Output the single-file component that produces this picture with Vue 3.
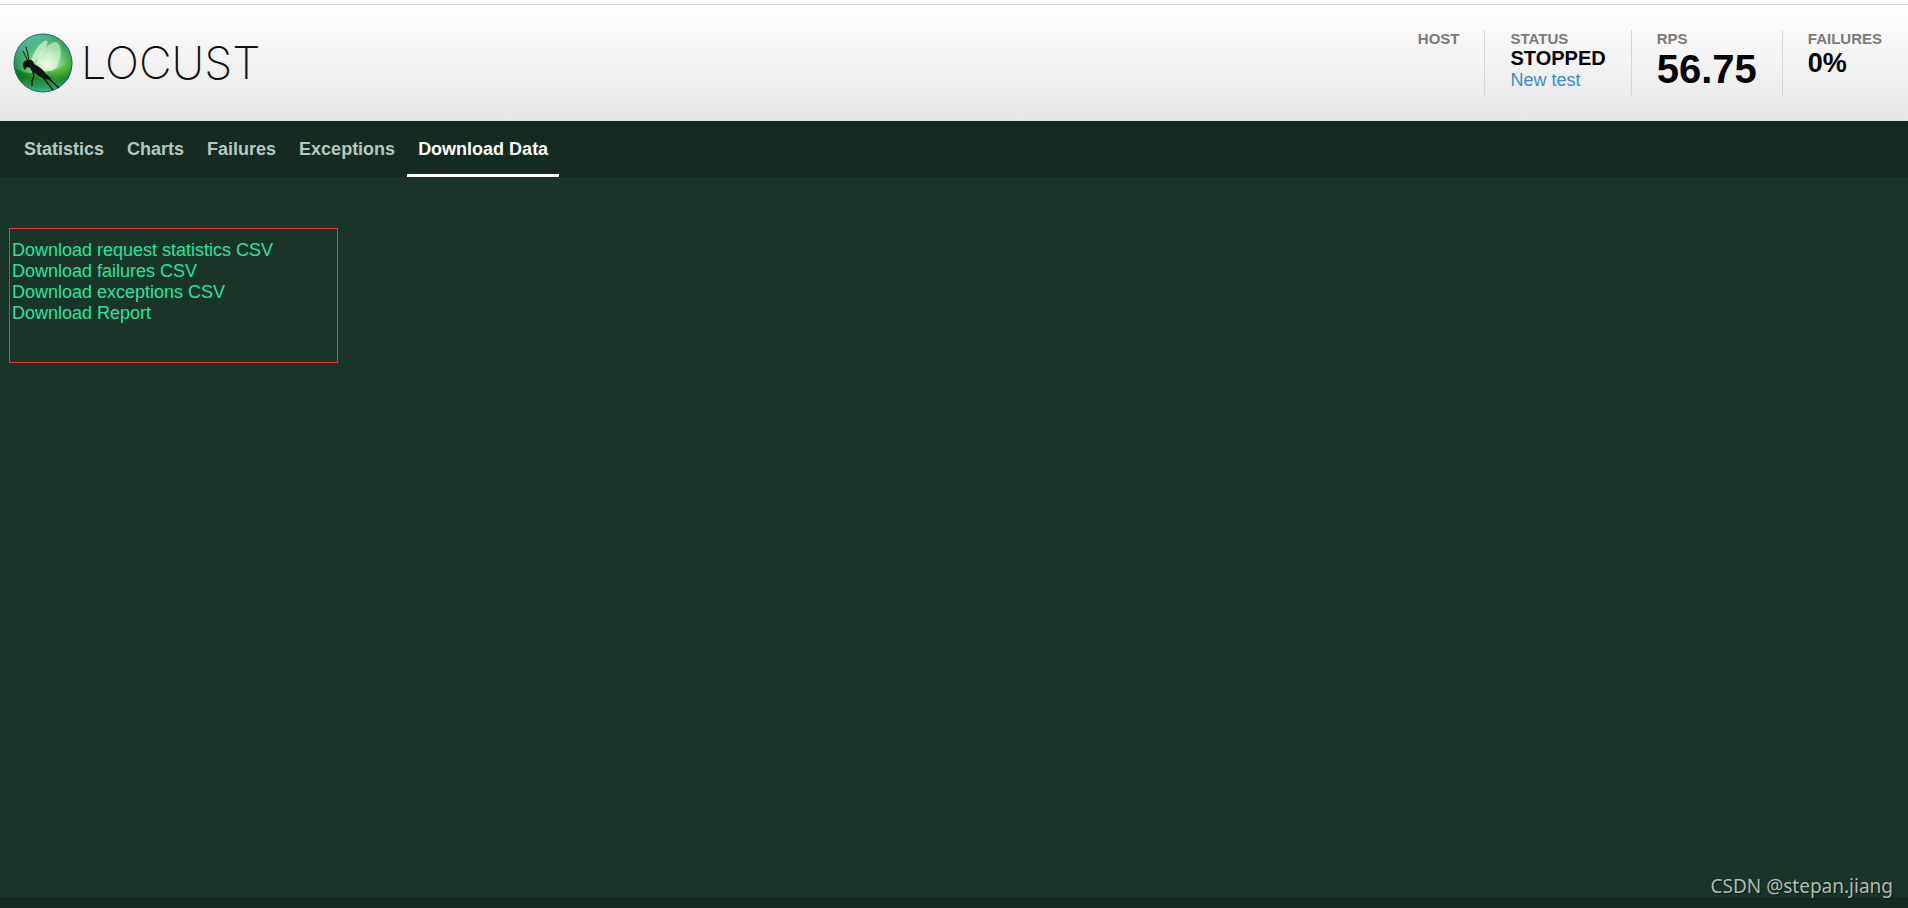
<template>
  <div class="page">
    <header class="top">
      <a href="#" class="brand" aria-label="Locust">
        <svg class="brand-mark" viewBox="0 0 60 60" aria-hidden="true">
          <defs>
            <radialGradient id="ball" cx="56%" cy="54%" r="56%">
              <stop offset="0" stop-color="#eafbe2" />
              <stop offset="0.3" stop-color="#a9e3a2" />
              <stop offset="0.65" stop-color="#4fb562" />
              <stop offset="1" stop-color="#1f8549" />
            </radialGradient>
            <linearGradient id="sky" x1="0.2" y1="0" x2="0.5" y2="0.7">
              <stop offset="0" stop-color="#62cfe0" stop-opacity="0.9" />
              <stop offset="0.6" stop-color="#5fc890" stop-opacity="0" />
            </linearGradient>
            <radialGradient id="ground" cx="62%" cy="10%" r="80%">
              <stop offset="0" stop-color="#b5eb9c" />
              <stop offset="0.4" stop-color="#4db43c" />
              <stop offset="0.75" stop-color="#17801f" />
              <stop offset="1" stop-color="#0f6b22" />
            </radialGradient>
            <linearGradient id="glow" x1="0" y1="0" x2="0" y2="1">
              <stop offset="0.75" stop-color="#45d0a8" stop-opacity="0" />
              <stop offset="1" stop-color="#45d0a8" stop-opacity="0.8" />
            </linearGradient>
          </defs>
          <circle cx="30" cy="30" r="29" fill="url(#ball)" />
          <circle cx="30" cy="30" r="29" fill="url(#sky)" />
          <path d="M2 35Q10 41 24 40Q46 38 59 26Q61 46 46 54Q30 63 14 54Q3 47 2 35Z" fill="url(#ground)" />
          <circle cx="30" cy="30" r="29" fill="url(#glow)" />
          <circle cx="30" cy="30" r="29" fill="none" stroke="#23685e" stroke-width="1" />
          <path d="M18 28Q22 14 31 8Q36 6 34 12Q30 20 21 29Z" fill="#e8fbe8" fill-opacity="0.6" />
          <path d="M23 30Q28 14 41 9Q48 8 48 20Q46 34 39 38Q31 39 23 30Z" fill="#f0fff0" fill-opacity="0.5" />
          <path d="M10 31Q11 27 15 27Q20 26 21 31Q29 35 33 41L38 45L37 47Q29 46 23 41Q18 38 17 35L14 34L12 37Q10 35 10 31Z" fill="#101713" />
          <path d="M15 28Q12 22 10 18M16 28Q15 20 13 14" fill="none" stroke="#101713" stroke-width="1" />
          <path d="M19 36L21 43L19 48L19 53M29 43L40 57M33 43L46 55" fill="none" stroke="#101713" stroke-width="1.4" />
        </svg>
        <span class="brand-name">LOCUST</span>
      </a>
      <div class="stats">
        <div class="stat">
          <span class="label">HOST</span>
        </div>
        <div class="stat">
          <span class="label">STATUS</span>
          <strong class="value">STOPPED</strong>
          <a href="#" class="new-test">New test</a>
        </div>
        <div class="stat">
          <span class="label">RPS</span>
          <strong class="value rps">{{ rps }}</strong>
        </div>
        <div class="stat">
          <span class="label">FAILURES</span>
          <strong class="value failures">{{ failRatio }}%</strong>
        </div>
      </div>
    </header>

    <nav class="tabs">
      <a
        v-for="tab in tabs"
        :key="tab"
        href="#"
        class="tab"
        :class="{ active: tab === activeTab }"
        @click.prevent="activeTab = tab"
      >{{ tab }}</a>
    </nav>

    <main class="content">
      <div class="downloads">
        <a v-for="item in downloads" :key="item" href="#">{{ item }}</a>
      </div>
    </main>

    <footer class="bottom"></footer>
    <span class="watermark">CSDN @stepan.jiang</span>
  </div>
</template>

<script setup>
import { ref } from 'vue'

const tabs = ['Statistics', 'Charts', 'Failures', 'Exceptions', 'Download Data']
const activeTab = ref('Download Data')

const downloads = [
  'Download request statistics CSV',
  'Download failures CSV',
  'Download exceptions CSV',
  'Download Report'
]

const rps = ref('56.75')
const failRatio = ref(0)
</script>

<style>
body {
  margin: 0;
  background: #19352a;
}
</style>

<style scoped>
.page {
  position: relative;
  display: flex;
  flex-direction: column;
  box-sizing: border-box;
  min-height: 100vh;
  padding-top: 4px;
  background: #ffffff;
  font-family: "Liberation Sans", Arial, sans-serif;
  font-size: 18px;
}

a {
  text-decoration: none;
}

.top {
  display: flex;
  justify-content: space-between;
  align-items: flex-start;
  border-top: 1px solid #d8d9dc;
  padding: 25px 0;
  background: linear-gradient(#ffffff, #e6e6e6);
}

.brand {
  display: flex;
  align-items: center;
  gap: 8px;
  padding: 3px 0 0 13px;
  color: #111111;
}

.brand-mark {
  width: 60px;
  height: 60px;
}

.brand-name {
  font-family: Inter, "Liberation Sans", sans-serif;
  font-size: 45px;
  font-weight: 200;
  line-height: 60px;
}

.stats {
  display: flex;
  padding-right: 1px;
}

.stat {
  display: flex;
  flex-direction: column;
  min-height: 66px;
  padding: 0 25px;
}

.stat + .stat {
  border-left: 1px solid #d6d6d6;
}

.label {
  font-size: 15px;
  font-weight: 700;
  line-height: 18px;
  color: #7b7b7b;
}

.value {
  font-size: 20px;
  line-height: 20px;
  color: #000000;
}

.rps {
  font-size: 40px;
  line-height: 42px;
}

.failures {
  font-size: 27px;
  line-height: 30px;
}

.new-test {
  line-height: 24px;
  color: #3d8bc1;
}

.tabs {
  display: flex;
  gap: 1px;
  padding-left: 13px;
  background: #152b22;
}

.tab {
  border-bottom: 3px solid transparent;
  padding: 3px 11px 0;
  font-weight: 700;
  line-height: 50px;
  color: #b4c8c0;
}

.tab.active {
  border-color: #ffffff;
  color: #ffffff;
}

.content {
  flex: 1;
  padding: 51px 9px;
  background: #19352a;
}

.downloads {
  display: flex;
  flex-direction: column;
  align-items: flex-start;
  box-sizing: border-box;
  max-width: 329px;
  min-height: 135px;
  border: 1px solid #e53b33;
  padding: 11px 2px;
}

.downloads a {
  line-height: 21px;
  color: #29e39b;
}

.bottom {
  height: 11px;
  background: #152b22;
}

.watermark {
  position: absolute;
  right: 15px;
  bottom: 8px;
  font-family: "Noto Sans", sans-serif;
  font-size: 19px;
  line-height: 28px;
  color: #b3bab7;
  text-shadow: 1px 1px 1px #0b1712;
}
</style>
